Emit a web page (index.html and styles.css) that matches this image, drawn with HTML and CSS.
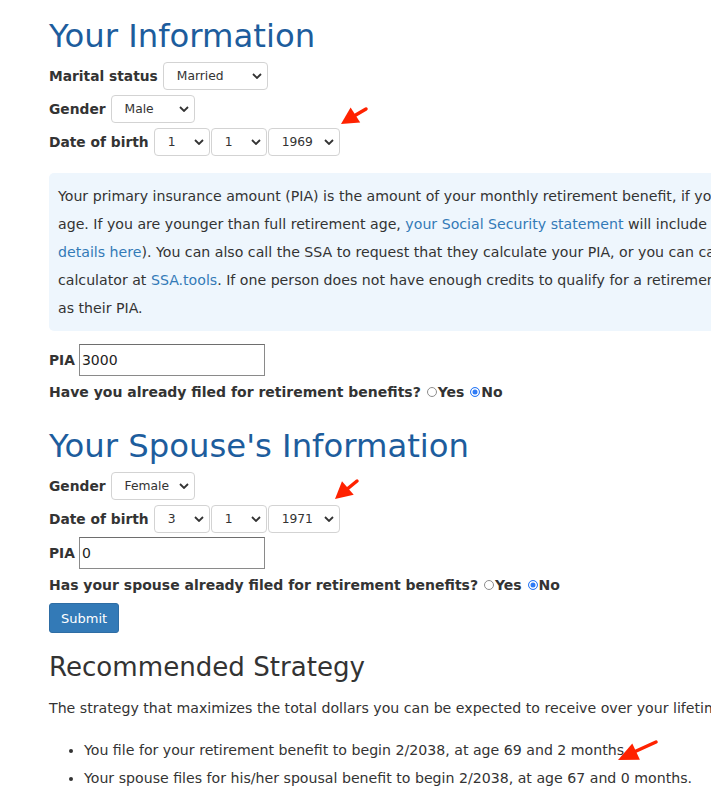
FILE: index.html
```html
<!DOCTYPE html>
<html lang="en">
<head>
<meta charset="utf-8">
<title>Open Social Security</title>
<link rel="stylesheet" href="styles.css">
</head>
<body>
<main class="page">
  <h1 class="section-title">Your Information</h1>

  <div class="field-row">
    <label class="field-label">Marital status</label>
    <span class="select-wrap w-marital">
      <select class="select"><option>Married</option><option>Single</option></select>
      <svg class="chev" viewBox="0 0 10 6" width="10" height="6"><path d="M1 1l4 4 4-4" fill="none" stroke="#333" stroke-width="1.8"/></svg>
    </span>
  </div>
  <div class="field-row">
    <label class="field-label">Gender</label>
    <span class="select-wrap w-gender">
      <select class="select"><option>Male</option><option>Female</option></select>
      <svg class="chev" viewBox="0 0 10 6" width="10" height="6"><path d="M1 1l4 4 4-4" fill="none" stroke="#333" stroke-width="1.8"/></svg>
    </span>
  </div>
  <div class="field-row">
    <label class="field-label">Date of birth</label>
    <div class="date-group">
      <span class="select-wrap w-day">
        <select class="select"><option>1</option></select>
        <svg class="chev" viewBox="0 0 10 6" width="10" height="6"><path d="M1 1l4 4 4-4" fill="none" stroke="#333" stroke-width="1.8"/></svg>
      </span>
      <span class="select-wrap w-day">
        <select class="select"><option>1</option></select>
        <svg class="chev" viewBox="0 0 10 6" width="10" height="6"><path d="M1 1l4 4 4-4" fill="none" stroke="#333" stroke-width="1.8"/></svg>
      </span>
      <span class="select-wrap w-year">
        <select class="select"><option>1969</option></select>
        <svg class="chev" viewBox="0 0 10 6" width="10" height="6"><path d="M1 1l4 4 4-4" fill="none" stroke="#333" stroke-width="1.8"/></svg>
      </span>
    </div>
  </div>

  <div class="info-box">
    <p class="info-text">Your primary insurance amount (PIA) is the amount of your monthly retirement benefit, if you file at full retirement<br>age. If you are younger than full retirement age, <a href="#">your Social Security statement</a> will include an estimate of your PIA (see<br><a href="#">details here</a>). You can also call the SSA to request that they calculate your PIA, or you can calculate it using the<br>calculator at <a href="#">SSA.tools</a>. If one person does not have enough credits to qualify for a retirement benefit, enter zero<br>as their PIA.</p>
  </div>

  <div class="field-row pia-row">
    <label class="field-label">PIA</label>
    <input class="text-input" type="text" value="3000">
  </div>
  <div class="question">
    <span class="q-text">Have you already filed for retirement benefits?</span>
    <label class="radio-label"><input class="radio" type="radio" name="filed1">Yes</label>
    <label class="radio-label"><input class="radio" type="radio" name="filed1" checked>No</label>
  </div>

  <h1 class="section-title spouse-title">Your Spouse's Information</h1>

  <div class="field-row">
    <label class="field-label">Gender</label>
    <span class="select-wrap w-gender">
      <select class="select"><option>Female</option><option>Male</option></select>
      <svg class="chev" viewBox="0 0 10 6" width="10" height="6"><path d="M1 1l4 4 4-4" fill="none" stroke="#333" stroke-width="1.8"/></svg>
    </span>
  </div>
  <div class="field-row">
    <label class="field-label">Date of birth</label>
    <div class="date-group">
      <span class="select-wrap w-day">
        <select class="select"><option>3</option></select>
        <svg class="chev" viewBox="0 0 10 6" width="10" height="6"><path d="M1 1l4 4 4-4" fill="none" stroke="#333" stroke-width="1.8"/></svg>
      </span>
      <span class="select-wrap w-day">
        <select class="select"><option>1</option></select>
        <svg class="chev" viewBox="0 0 10 6" width="10" height="6"><path d="M1 1l4 4 4-4" fill="none" stroke="#333" stroke-width="1.8"/></svg>
      </span>
      <span class="select-wrap w-year">
        <select class="select"><option>1971</option></select>
        <svg class="chev" viewBox="0 0 10 6" width="10" height="6"><path d="M1 1l4 4 4-4" fill="none" stroke="#333" stroke-width="1.8"/></svg>
      </span>
    </div>
  </div>
  <div class="field-row pia-row spouse-pia">
    <label class="field-label">PIA</label>
    <input class="text-input" type="text" value="0">
  </div>
  <div class="question">
    <span class="q-text">Has your spouse already filed for retirement benefits?</span>
    <label class="radio-label"><input class="radio" type="radio" name="filed2">Yes</label>
    <label class="radio-label"><input class="radio" type="radio" name="filed2" checked>No</label>
  </div>

  <button class="btn-submit" type="button">Submit</button>

  <h2 class="strategy-title">Recommended Strategy</h2>
  <p class="strategy-intro">The strategy that maximizes the total dollars you can be expected to receive over your lifetime is for:</p>
  <ul class="strategy-list">
    <li>You file for your retirement benefit to begin 2/2038, at age 69 and 2 months.</li>
    <li>Your spouse files for his/her spousal benefit to begin 2/2038, at age 67 and 0 months.</li>
  </ul>
</main>

<svg class="annotations" width="711" height="800" viewBox="0 0 711 800">
  <g fill="#ff2200" stroke="#ff2200">
    <line x1="366" y1="109" x2="354" y2="116" stroke-width="3.5" stroke-linecap="round"/>
    <polygon points="341,124 350.6,107.4 360.2,122.6" stroke="none"/>
    <line x1="357" y1="481" x2="346" y2="490" stroke-width="3.5" stroke-linecap="round"/>
    <polygon points="335,499 342,481.2 353.7,494.8" stroke="none"/>
    <line x1="656" y1="742" x2="634" y2="752" stroke-width="3.5" stroke-linecap="round"/>
    <polygon points="618,760 632.3,743.4 639.9,759.8" stroke="none"/>
  </g>
</svg>
</body>
</html>
```
FILE: styles.css
```css
html {
  overflow-x: hidden;
}
body {
  margin: 0;
  position: relative;
  font-family: "DejaVu Sans", Verdana, sans-serif;
  font-size: 14.15px;
  color: #333;
  background: #fff;
}
.page {
  width: 1000px;
  padding: 16px 0 0 49px;
}
a {
  color: #337ab7;
  text-decoration: none;
}
.section-title {
  margin: 0;
  font-size: 32.3px;
  line-height: 40px;
  font-weight: normal;
  color: #1d5d9d;
}
.field-row {
  display: flex;
  align-items: center;
  gap: 5px;
  height: 28px;
  margin-top: 5px;
}
.section-title + .field-row {
  margin-top: 6px;
}
.field-label {
  font-weight: bold;
  font-size: 13.8px;
}
.date-group {
  display: flex;
  gap: 1px;
}
.select-wrap {
  position: relative;
  display: inline-block;
  height: 28px;
}
.select {
  -webkit-appearance: none;
  appearance: none;
  width: 100%;
  height: 28px;
  margin: 0;
  padding: 0 18px 0 13px;
  border: 1px solid #d3d3d3;
  border-radius: 4px;
  background: #fff;
  font-family: "DejaVu Sans", Verdana, sans-serif;
  font-size: 12.3px;
  color: #333;
  box-sizing: border-box;
}
.chev {
  position: absolute;
  right: 6px;
  top: 11px;
  pointer-events: none;
}
.w-marital { width: 105px; }
.w-gender { width: 84px; }
.w-day { width: 56px; }
.w-year { width: 72px; }

.info-box {
  margin-top: 17px;
  background: #eef6fd;
  border-radius: 5px;
  padding: 9px 9px;
}
.info-text {
  margin: 0;
  line-height: 28px;
  white-space: nowrap;
}

.pia-row {
  height: 32px;
  gap: 4px;
  margin-top: 13px;
}
.spouse-pia {
  margin-top: 4px;
}
.text-input {
  width: 186px;
  height: 32px;
  box-sizing: border-box;
  margin: 0;
  padding: 0 2px;
  border: 1px solid #8a8a8a;
  border-top-color: #6e6e6e;
  font-family: "DejaVu Sans", Verdana, sans-serif;
  font-size: 14px;
  color: #222;
  background: #fff;
}
.question {
  margin-top: 5px;
  font-weight: bold;
  font-size: 14px;
  line-height: 22px;
}
.radio-label {
  display: inline-flex;
  align-items: center;
}
.radio {
  -webkit-appearance: none;
  appearance: none;
  width: 10px;
  height: 10px;
  margin: 0 1px 0 1px;
  border: 1px solid #8d8d8d;
  border-radius: 50%;
  background: #fff;
  box-sizing: border-box;
}
.radio:checked {
  border-color: #2f7cf6;
  background: #2f7cf6;
  box-shadow: inset 0 0 0 1.5px #fff;
}

.spouse-title {
  margin-top: 23px;
}

.btn-submit {
  display: block;
  margin-top: 7px;
  height: 30px;
  padding: 0 11px;
  border: 1px solid #2e6da4;
  border-radius: 3px;
  background: #337ab7;
  color: #fff;
  font-family: "DejaVu Sans", Verdana, sans-serif;
  font-size: 13px;
}

.strategy-title {
  margin: 16px 0 0;
  font-size: 26.1px;
  line-height: 36px;
  font-weight: normal;
  color: #333;
}
.strategy-intro {
  margin: 9px 0 0;
  line-height: 28px;
  white-space: nowrap;
}
.strategy-list {
  margin: 14px 0 0;
  padding-left: 35px;
  line-height: 28px;
}

.annotations {
  position: absolute;
  left: 0;
  top: 0;
  pointer-events: none;
}
```
